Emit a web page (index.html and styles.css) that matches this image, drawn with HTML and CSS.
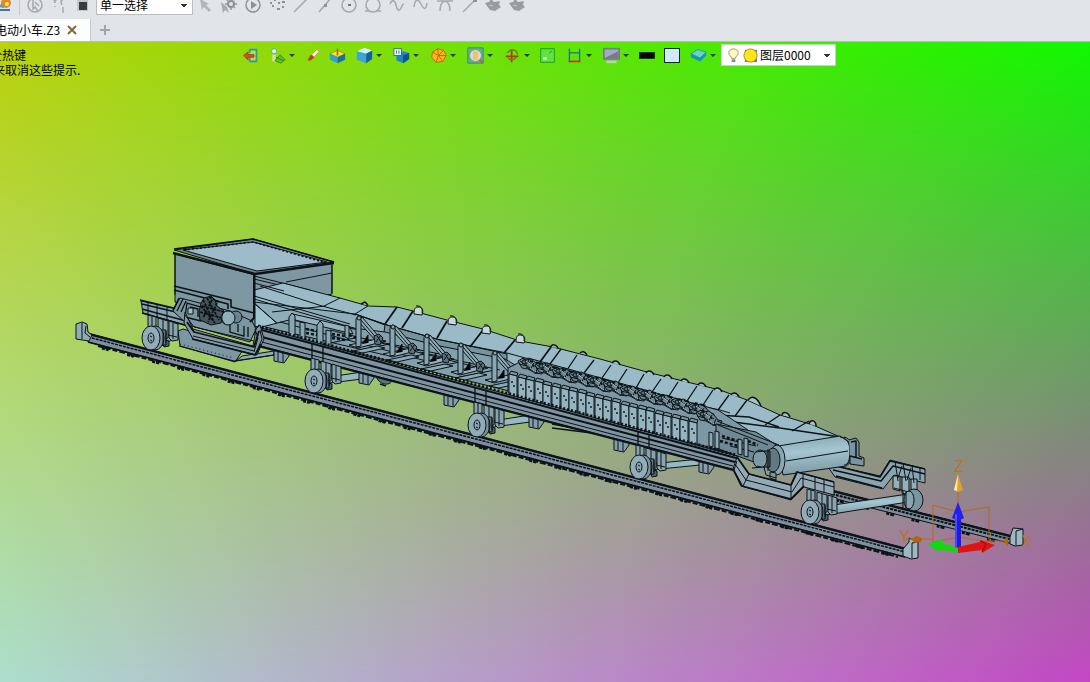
FILE: index.html
```html
<!DOCTYPE html>
<html lang="zh-CN">
<head>
<meta charset="utf-8">
<title>电动小车.Z3</title>
<link rel="stylesheet" href="styles.css">
</head>
<body>
<div class="app">
<header class="chrome">
  <div class="toolbar">
    <button class="tool tool-first" aria-label="样式"><svg viewBox="0 0 24 20"><path d="M7 12l5-8v9z" fill="#4a9bd0"/><circle cx="14" cy="8" r="5" fill="#e48a1c"/><circle cx="15" cy="9" r="2" fill="#fbe6b0"/><path d="M6 15h12" stroke="#3a78b0" stroke-width="2"/></svg></button>
    <span class="sep"></span>
    <button class="tool" aria-label="历史"><svg viewBox="0 0 24 20"><circle cx="12" cy="10" r="7" class="g"/><path d="M10 5v9l2-2 3 4M12 7l4 4" class="g"/></svg></button>
    <button class="tool" aria-label="链"><svg viewBox="0 0 24 20"><path d="M8 5v3M16 5c-3 0-2 3-1 5M16 12v6M8 11v1" class="g"/><path d="M6 3l4 2-3 3z" fill="#a9adb0"/></svg></button>
    <button class="tool tool-square" aria-label="填充"><svg viewBox="0 0 24 20"><path d="M6 5h11v11H6z" fill="#c4c7ca"/><path d="M8 7h8v8H8z" fill="#3c3c3c"/></svg></button>
    <select class="filter" aria-label="选择方式"><option>单一选择</option></select>
    <button class="tool" aria-label="选择"><svg viewBox="0 0 24 20"><path d="M7 4l2 11 2-3 5 5 2-2-5-5 3-1z" fill="#b2b5b8"/></svg></button>
    <button class="tool" aria-label="选项"><svg viewBox="0 0 24 20"><path d="M4 7l2 11 2-3 4 3-2-6z" fill="#a8abae"/><circle cx="14" cy="9" r="3" class="g d w"/><path d="M14 3v2M14 13v2M8 9h2M18 9h2M10 5l1 1M17 5l1-1M17 12l1 1" class="g d"/></svg></button>
    <button class="tool" aria-label="播放"><svg viewBox="0 0 24 20"><circle cx="12" cy="10" r="7" class="g d"/><path d="M10 6l6 4-6 4z" fill="#8e9194"/></svg></button>
    <button class="tool" aria-label="点集"><svg viewBox="0 0 24 20"><path d="M5 8h2M9 5h2M13 8h2M17 7h3M7 11h2M12 14h3M17 12h2" class="g d w"/></svg></button>
    <button class="tool" aria-label="直线"><svg viewBox="0 0 24 20"><path d="M5 17L19 3" class="g"/></svg></button>
    <button class="tool" aria-label="中点"><svg viewBox="0 0 24 20"><path d="M6 17L18 3" class="g"/><path d="M11 9h3v3h-3z" fill="#8e9194"/></svg></button>
    <button class="tool" aria-label="圆心"><svg viewBox="0 0 24 20"><circle cx="12" cy="10" r="7" class="g"/><path d="M11 9h3v2h-3z" fill="#777"/></svg></button>
    <button class="tool" aria-label="圆"><svg viewBox="0 0 24 20"><circle cx="12" cy="10" r="7" class="g"/><path d="M4 16h4M16 16h4" class="g"/></svg></button>
    <button class="tool" aria-label="曲线"><svg viewBox="0 0 24 20"><path d="M5 9c2-5 5-4 6 1s3 7 5 3 1-4 3-4" class="g"/></svg></button>
    <button class="tool" aria-label="样条"><svg viewBox="0 0 24 20"><path d="M5 12c1-8 4-9 7-3s5 6 6-1" class="g"/></svg></button>
    <button class="tool" aria-label="相切"><svg viewBox="0 0 24 20"><path d="M4 6h16M7 16c0-13 10-13 10 0" class="g"/></svg></button>
    <button class="tool" aria-label="端点"><svg viewBox="0 0 24 20"><path d="M6 17L18 5" class="g"/><path d="M16 3h4v4h-4z" fill="#8e9194"/></svg></button>
    <button class="tool" aria-label="零件"><svg viewBox="0 0 24 20"><path d="M4 8l4-1 2-3 3 3 6-1-1 4 2 2-6 4-5-1-3-4z" fill="#999c9f"/><path d="M8 10l4 1" stroke="#c6c8ca" fill="none"/></svg></button>
    <button class="tool" aria-label="组件"><svg viewBox="0 0 24 20"><path d="M4 8l4-1 2-3 3 3 6-1-1 4 2 2-6 4-5-1-3-4z" fill="#999c9f"/><path d="M8 10l4 1" stroke="#c6c8ca" fill="none"/></svg></button>
  </div>
  <div class="tabs">
    <div class="tab"><span class="tab-name">电动小车.Z3</span><button class="tab-close" aria-label="关闭"><svg viewBox="0 0 10 10"><path d="M1 1l8 8M9 1L1 9" stroke="#806a3c" stroke-width="2"/></svg></button></div>
    <button class="tab-add" aria-label="新建"><svg viewBox="0 0 12 12"><path d="M6 1v10M1 6h10" stroke="#a2a5a8" stroke-width="2"/></svg></button>
  </div>
</header>

<main class="view">
  <svg class="scene" viewBox="0 42 1090 640" role="img" aria-label="三维模型">
    <defs>
      <linearGradient id="drum" x1="0" y1="0" x2="0.150" y2="1"><stop offset="0" stop-color="#86a4b0"/><stop offset="0.450" stop-color="#a4c5d1"/><stop offset="1" stop-color="#7f9ba7"/></linearGradient>
      <g id="wheel">
        <path d="M8 -8h7v15H8z" fill="#617781"/>
        <ellipse cx="4" cy="0" rx="9" ry="12" fill="#7b949f"/>
        <ellipse cx="0" cy="0" rx="9" ry="12" fill="#93adb8"/>
        <ellipse cx="0" cy="0" rx="3" ry="5" fill="#8ba5b0"/>
        <path d="M-1 -2l2 1M-1 2l2 1M12 -6v14M15 -7v12"/>
      </g>
      <g id="legs">
        <path d="M-3 -25l8 2v15l-8-2zM7 -22l10 3v17l-6 1-4-3zM18 -19l9 3v16l-6 1-3-3z" fill="#8aa4af"/>
        <path d="M1 -24v14M12 -20v17M22 -17v16M8 -6h8M17 -5l9 2"/>
        <path d="M10 -2l8 3v5l-5 1z" fill="#4d616a"/>
      </g>
      <g id="bracket"><path d="M0 0l15 4v3l-5 7-10-2z" fill="#839eaa"/><path d="M4 1v11M9 3v10"/></g>
      <g id="frame">
        <path d="M-8 30l28-6 9 2-28 7z" fill="#93b2be"/>
        <path d="M-4 36l24-5 8 2-22 5z" fill="#8ba9b5"/>
        <path d="M2 3l3-1 18 21 1 5-5-2L2 7z" fill="#8fadb9"/>
        <path d="M4 5l17 20"/>
        <path d="M-1 32V4l2-3 3 1V31z" fill="#8aa6b2"/>
        <circle cx="2" cy="3" r="2" fill="#8ba5b0"/>
        <path d="M17 21l5-2 4 4-3 7-5-1z" fill="#5a717b"/>
        <path d="M20 21l4 6M24 20l-5 7M5 29l6-9v8"/>
      </g>
      <g id="plate">
        <path d="M0 0l2-3 7 2-1 3z" fill="#7b959f"/>
        <path d="M0 0l8 2v22l-8-3z" fill="#96b4c0"/>
        <path d="M3 7v2M5 11v2" stroke-width="1.400"/>
      </g>
      <g id="cluster">
        <path d="M-3 -5l5-3 3 2 5-1 5 4 4 5 4 1-2 5-7-1-7-4-6-1z" fill="#6c858f"/>
        <path d="M-1 -5l17 12M1 -8l14 9M5 1l12 6M8 -6l-4 6M13 -3l-4 7M17 1l-3 7M-2 -2l8 2M7 -5l6 6"/>
        <circle cx="3" cy="-4" r="2" fill="#566c76"/>
        <path d="M5 -5l6 4M9 2l6 4" stroke="#a5c2cd"/>
      </g>
      <g id="idler"><path d="M-5 4c0-5 1-7 4-7 4 0 6 3 4 8z" fill="#c9d8dc" stroke-width="1"/><path d="M-3 -4c4 -1 7 2 6 7" fill="none"/></g>
    </defs>

    <g class="line">
      <!-- rear rail -->
      <path d="M832 490l181 46v8l-181-46z" fill="#7d8d99"/>
      <path d="M832 491l181 46" stroke-width="2"/>
      <path d="M832 494l181 46" stroke-width="2" stroke-dasharray="3 1"/>
      <path d="M836 500l175 45" stroke-width="3" stroke-dasharray="3 1 4 18"/>
      <path d="M1010 544v-7l3-9 10 1v16l-8 1z" fill="#9db8c2"/><path d="M1016 545v-14l7-2"/>

      <!-- front rail -->
      <path d="M88 333l817 215v9L88 342z" fill="#7f8e9e"/>
      <path d="M88 334l817 215" stroke-width="2"/>
      <path d="M88 337l817 215" stroke-width="1.500" stroke-dasharray="3 1"/>
      <path d="M88 342l817 215" stroke-width="1.800"/>
      <path d="M98 346l800 211" stroke-width="2" stroke-dasharray="5 2 6 2"/>
      <path d="M102 348l796 209" stroke-width="3" stroke-dasharray="3 1 3 19"/>
      <path d="M76 324l6-2 5 2 1 8 4 3-3 6-13-2z" fill="#90abb6"/><path d="M82 323v16M86 326l-1 7 5 4"/>
      <path d="M903 556v-7l6-7v-4l9 4v16l-7 1z" fill="#9db8c2"/><path d="M912 558v-15l6-1"/>

      <!-- axles -->
      <path d="M322 378l40-6v7l-40 5zM486 422l44-7v7l-44 6zM650 464l50-5v6l-50 5z" fill="#98b8c4"/>
      <path d="M820 507l88-13v8l-88 14z" fill="url(#drum)"/>
      <path d="M160 337l20-6 8 4-24 8z" fill="#86a0ac"/>

      <!-- lower chute -->
      <path d="M178 331l5-2 62 18-10 15-55-16z" fill="#7c96a2"/>
      <path d="M236 361l38-6v-4l-32 5z" fill="#8fabb7"/>
      <path d="M179 346l55 15 40-6"/>
      <path d="M180 344l54 14" stroke-dasharray="1 3"/>

      <!-- brackets under the frame -->
      <use href="#bracket" x="274" y="349"/><use href="#bracket" x="359" y="371"/><use href="#bracket" x="444" y="393"/><use href="#bracket" x="529" y="415"/><use href="#bracket" x="614" y="438"/><use href="#bracket" x="699" y="460"/>
      <path d="M376 376c2 8 14 12 17 3z" fill="#5d737d"/><path d="M552 424l38 7M552 428l40 5M380 384l6 2" stroke-width="1.500"/>

      <!-- rear chassis -->
      <path d="M828 467l4-2 48 11 10-16 35 9v14l-31-8-11 14-48-12z" fill="#8ba5b0"/>
      <path d="M832 465l48 12 10-16 35 8M833 470l48 11 12-15 32 8M836 476l46 12" stroke-width="1.500"/>
      <path d="M893 476h7v15l-7-2zM902 477h7v18l-7-2zM911 479h6v19l-6-3z" fill="#94b0bb"/>
      <path d="M895 461l3 20M903 463l3 18M912 465l2 18M920 468v12M894 488l22 6M898 478l4-12M907 480l4-12"/>
      <ellipse cx="914" cy="500" rx="9" ry="11" fill="#7b95a0"/><ellipse cx="909" cy="500" rx="5" ry="9" fill="#88a5b0"/><path d="M903 491v17M906 492v16"/>

      <!-- hopper rear wall and belt -->
      <path d="M254 274l78-11v31l-20 5-58-8z" fill="#7f97a2"/>
      <path d="M254 276l56 14M254 279l46 11M286 282l46-9"/>
      <path d="M254 290l29-7 57 15 28 8 29 1 16 4 34 9 36 9 37 12 33 6 47 12 47 13 40 10 33 8 27 10 33 15 33 10 27 12-62 11-58-25-45-13-53-13-60-15-53-14-32-10-70-15-50-15-32-11-100-12z" fill="#99bac6"/>
      <path d="M355 314l32 11 50 14 70 15v10l-32-1-36-10-52-13-34-10z" fill="#7893a0"/>
      <path d="M254 302l101 12 30 11-2 14-97-5-32-9z" fill="#8fadb9"/>
      <path d="M254 303l33 29-33-6z" fill="#a1c3cf"/>
      <path d="M260 286l62 20 34 9M340 298l-16 8M326 306l-54 6M254 303l33 29M254 296l96 28M254 299l100 29M254 283l30 8"/>
      <path d="M368 306l-13 8 32 11 53 15 67 13 33 9 47 15 53 13 47 13 33 7 10 3"/>

      <!-- belt seams -->
      <path d="M397 307l-12 17M413 311l-11 17M447 321l-10 17M483 330l-13 17M515 340l-11 13M551 347l-11 15" stroke-width="1.800"/>
      <path d="M561 349l-11 15M577 355l-10 15M594 360l-10 13M611 365l-9 13M627 369l-9 14M644 374l-8 14M661 379l-9 13M678 382l-9 14M697 386l-10 15M713 390l-10 15M729 395l-11 15M747 400l-12 16M780 415l-15 10M809 421l-17 10" stroke-width="1.300"/>
      <path d="M718 420l62 8 60 9M717 415l32 2 30 10" stroke-width="1.500"/>

      <!-- return idlers along the upper edge -->
      <use href="#idler" x="419" y="310"/><use href="#idler" x="453" y="320"/><use href="#idler" x="487" y="329"/><use href="#idler" x="521" y="338"/>
      <path d="M361 304l4-2 3 3M551 347c0-3 5-3 7 1M580 353c2-2 5-2 7 2M612 363c2-3 6-3 8 2M646 373c1-3 6-3 8 2M664 377c1-3 6-3 8 2M681 381c1-3 6-3 8 2M698 385c1-3 6-3 8 2M714 390c1-3 6-3 8 2M731 395c1-3 6-3 8 2M748 400c4-5 9-3 13 6M782 415c1-4 6-3 8 2M809 424c1-5 7-4 7 2" fill="#a9c0c9" stroke-width="1.500"/>
    </g>

    <!-- deck and frames -->
    <g class="line">
      <path d="M258 328l31-8 96 12 50 13 70 14 20 12v24z" fill="#839fab"/>
      <path d="M265 327l120 28M280 322l150 40M330 330l150 38M300 320l60 10M370 340l70 14M420 352l80 18M320 345l40-8M350 352l40-8M385 362l40-8M420 370l40-8M455 378l40-8"/>
      <path d="M293 314l52 12 5 2 3 6-58-14z" fill="#93b2be"/>
      <path d="M289 338v-21l3-4 3 3v24zM300 341v-19l5 1v19zM317 346v-21l3-4 3 3v24zM326 346v-16l5 1v17zM345 337v-12l4 1v13z" fill="#8aa6b2"/>
      <path d="M306 329l11 2M306 333l11 2M332 334l13 2M332 338l13 2M349 335l14 6" stroke-width="2.500" stroke-dasharray="3 2"/>
      <use href="#frame" x="357" y="315"/><use href="#frame" x="391" y="324"/><use href="#frame" x="425" y="333"/><use href="#frame" x="459" y="342"/><use href="#frame" x="493" y="350"/>
      <path d="M508 368l20-10 190 52 30 20v28l-240-66z" fill="#7d98a4"/>
      <use href="#cluster" x="521" y="366"/><use href="#cluster" x="538" y="370"/><use href="#cluster" x="555" y="375"/><use href="#cluster" x="572" y="379"/><use href="#cluster" x="589" y="384"/><use href="#cluster" x="606" y="388"/><use href="#cluster" x="623" y="393"/><use href="#cluster" x="640" y="397"/><use href="#cluster" x="657" y="402"/><use href="#cluster" x="674" y="406"/><use href="#cluster" x="691" y="411"/><use href="#cluster" x="699" y="418"/>
      <path d="M530 361l180 46" stroke-width="2" stroke-dasharray="3 3 5 6"/>
      <use href="#plate" x="509" y="374"/><use href="#plate" x="518" y="377"/><use href="#plate" x="526" y="379"/><use href="#plate" x="535" y="381"/><use href="#plate" x="543" y="384"/><use href="#plate" x="552" y="386"/><use href="#plate" x="561" y="388"/><use href="#plate" x="569" y="390"/><use href="#plate" x="578" y="392"/><use href="#plate" x="586" y="395"/><use href="#plate" x="595" y="397"/><use href="#plate" x="603" y="399"/><use href="#plate" x="612" y="401"/><use href="#plate" x="621" y="404"/><use href="#plate" x="629" y="406"/><use href="#plate" x="638" y="408"/><use href="#plate" x="646" y="410"/><use href="#plate" x="655" y="413"/><use href="#plate" x="663" y="415"/><use href="#plate" x="672" y="417"/><use href="#plate" x="680" y="419"/><use href="#plate" x="689" y="421"/>

      <!-- head end -->
      <path d="M716 424l40 8 22 14-8 22-54-20z" fill="#6f8893"/>
      <path d="M717 421l62 24M718 425l50 20M722 438l34 8M730 446l24 6"/>
      <path d="M709 446v-14l4 1v14zM715 448v-17l4 1v17zM738 454v-15l4 1v15zM744 456v-18l4 1v18z" fill="#8ba8b4"/>
      <path d="M720 441l18 5M722 436l16 5M748 441l10 4" stroke-width="2.500" stroke-dasharray="3 2"/>
      <path d="M778 446l62-10 9 6 2 20-5 4-63 9z" fill="url(#drum)"/>
      <path d="M786 461l62-10"/>
      <path d="M840 437c7 0 11 8 10 17s-3 11-6 11M844 437c7 2 9 8 8 15s-3 11-5 12"/>
      <ellipse cx="777" cy="460" rx="8" ry="15" fill="#8aa6b1"/><ellipse cx="773" cy="460" rx="7" ry="12" fill="#627983"/>
      <path d="M764 451h6v16h-6z" fill="#4b6069"/><ellipse cx="760" cy="459" rx="7" ry="9" fill="#7f9aa5"/><path d="M756 452l8-1M757 466l8 2M768 449v22"/>
      <path d="M849 440l7-2 3 4v14l5 2v8l-14-2v-8" fill="#7b95a0"/><path d="M851 442l5-1v16M850 456l12 3" stroke-width="1.500"/>
      <path d="M752 468l12-1 2 8 10 3M770 472l6 1v7l-6-2z" fill="#7f99a4"/>

      <!-- main beam -->
      <path d="M254 329l4-2 479 129-1 14-479-125z" fill="#8093a0"/>
      <path d="M258 329l478 129" stroke-width="2"/>
      <path d="M258 326l478 129" stroke-width="3" stroke-dasharray="2 2"/>
      <path d="M258 336l477 126" stroke-width="2"/>
      <path d="M258 341l475 125"/>
      <path d="M258 346l475 124" stroke-width="2"/>
      <path d="M312 343v15M323 346v15M475 387v15M486 390v15M638 431v15M649 434v15" stroke-width="1.300"/>

      <!-- front end of chassis -->
      <path d="M737 457l12 17 42 11 6-13 37 10v13l-30-8-13 13-50-14-8-17z" fill="#93a9b5"/>
      <path d="M737 457l12 17 42 11 6-13 37 10M733 469l9 17 49 13 13-13" stroke-width="1.800"/>
      <path d="M735 464l11 16 46 12 9-14 33 9M737 461l-3 9M749 474l-6 12M791 486v13M803 474v12M815 478v12M824 480v12"/>

      <!-- feeder drive -->
      <path d="M175 254l80 21v53l-80-26z" fill="#7d97a3"/>
      <path d="M174 286l57 14v7l23 6M174 290l54 14v5" stroke-width="1.600"/>
      <path d="M141 301l40 9 8 16-46-13z" fill="#8ba5b0"/>
      <path d="M140 300l42 10M142 304l42 10M142 309l44 12M142 313l46 13" stroke-width="1.500"/>
      <path d="M148 302v12M157 304v13M167 307v13"/>
      <path d="M173 311l7-13 12 3 38 10 22 10 4 8-6 13-62-17z" fill="#7c96a1"/>
      <path d="M173 310l6-12M177 311l6-12M181 312l5-11M187 303l14 4v14l-16-4zM190 307l8 2v8M230 322v10l14 4v-10M238 324v8M248 327v10" stroke-width="1.300"/>
      <path d="M188 308h5v6h-5z" fill="#a2bec8"/>
      <path d="M201 303l3-5 7-2 4 4 2 6 7 5-3 12-10 2-11-5-1-8z" fill="#46565d"/>
      <path d="M203 300l11 22M207 298l12 22M201 306l14 17M212 300l-9 18M217 303l-9 19M200 312l22 6M202 306l22 6M209 297l10 5" stroke-width="1.800" stroke-dasharray="3 1"/>
      <circle cx="236" cy="317" r="6" fill="#6b838e"/><circle cx="228" cy="318" r="7" fill="#91aeb9"/><path d="M224 312c-3 4-3 8 1 12"/>
      <path d="M185 312l8 17 60 17 3-17 4-4 4 14-7 16-64-16-9-16z" fill="#8299a5"/>
      <path d="M187 322l7 10 60 15 5-16M192 339l63 16 6-11" stroke-width="1.800"/>
      <path d="M185 315l9 12 60 14M193 336l61 15M255 329l3 9-4 14M260 330l2 9-5 12"/>
      <path d="M254 275v43l-4 4" stroke-width="2"/>

      <!-- hopper rim -->
      <path d="M174 250l79-11 81 23-79 12z" fill="#71858f"/>
      <path d="M183 250l70-8 74 20-70 9z" fill="#9dbbc8"/>
      <path d="M174 249l79-10 81 23" stroke-width="1.500"/>
      <path d="M173 253l82 21 79-11" stroke-width="2.400"/>
      <path d="M184 250l69-8 73 21" stroke-width="1.500" stroke-dasharray="2 2"/>
      <path d="M175 253v42M332 265v28"/>

      <!-- wheel sets -->
      <use href="#legs" x="151" y="340"/><use href="#legs" x="314" y="383"/><use href="#legs" x="477" y="427"/><use href="#legs" x="639" y="470"/><use href="#legs" x="810" y="514"/>
      <use href="#wheel" x="151" y="338"/><use href="#wheel" x="314" y="381"/><use href="#wheel" x="477" y="425"/><use href="#wheel" x="639" y="467"/><use href="#wheel" x="810" y="512"/>
    </g>

    <!-- axis triad -->
    <g class="triad">
      <path d="M933 545v-40l25 7 31-5v38M958 490v20M933 542l25-5 31 5M905 539h28M989 541h20" fill="none" stroke="#b5691e"/>
      <path d="M954 490l4-16 5 16-5 2z" fill="#e3a02d"/><path d="M958 474l-4 16 3 1z" fill="#fff0b4"/>
      <path d="M911 539l6-3 5 2-1 4-6 1zM1003 541l5-4v9z" fill="#b0640f"/>
      <path d="M955 518h6v31l-3 2-3-2z" fill="#1d1ae0"/><path d="M952 518l6-16 6 16-6 3z" fill="#2220f0"/><path d="M956 514v34" stroke="#7d7bff"/>
      <path d="M958 552l-20-2v2l-10-8 14-5v4l16 5z" fill="#11d811"/>
      <path d="M958 547l22-5v-2l15 5-13 8v-3l-24 3z" fill="#e01212"/><path d="M981 541l5 3-4 8" stroke="#8d0808" fill="none"/>
      <text x="954" y="472">Z</text><text x="899" y="542">Y</text><text x="1021" y="547">X</text>
    </g>
  </svg>

  <div class="overlay">
    <p class="hints"><span class="hint hint-a">全热键</span><span class="hint">来取消这些提示.</span></p>
    <div class="viewbar">
      <button class="vb" aria-label="退出"><svg viewBox="0 0 20 20"><path d="M9 3h8v14H9M9 3v4M9 13v4" fill="#b4dc60" stroke="#2b9aa0" stroke-width="2"/><path d="M2 10l5-4v3h7v3H7v3z" fill="#d8551c" stroke="#9b3410"/></svg></button>
      <button class="vb drop" aria-label="显示"><svg viewBox="0 0 20 20"><circle cx="6" cy="5" r="3" fill="#e8f5fb" stroke="#5598b0"/><path d="M4 9h4v8H4z" fill="#d8dfa8"/><path d="M7 16l6-7 6 6-5 4z" fill="#5ac420" stroke="#338810"/><path d="M8 12l9 4" stroke="#2a7a10"/></svg></button>
      <button class="vb" aria-label="笔刷"><svg viewBox="0 0 20 20"><path d="M9 9l6-6 3 2-6 7z" fill="#fff3dc" stroke="#c98a4a"/><path d="M4 16l4-7 4 3-4 4z" fill="#c43a18"/></svg></button>
      <button class="vb" aria-label="基准"><svg viewBox="0 0 20 20"><path d="M1 8l9-4 9 4-9 4z" fill="#ffe42c" stroke="#a09010"/><path d="M1 8l9 4v7l-9-4z" fill="#28a5d8"/><path d="M10 12l9-4v7l-9 4z" fill="#1671a8"/><path d="M10 2v8" stroke="#aa7010" stroke-width="2"/></svg></button>
      <button class="vb drop" aria-label="着色"><svg viewBox="0 0 20 20"><path d="M1 5l9-4 9 3-7 4z" fill="#d4f1fb"/><path d="M1 5l11 3v11L1 15z" fill="#3ba4de"/><path d="M12 8l7-4v10l-7 5z" fill="#135f9e"/></svg></button>
      <button class="vb drop" aria-label="视图"><svg viewBox="0 0 20 20"><path d="M4 8l8-3 7 2v7l-7 5-8-3z" fill="#1f85c3"/><path d="M12 10l7-3v7l-7 5z" fill="#0c5389"/><path d="M1 2h9v8H1z" fill="#edf8fd" stroke="#245d8c"/><path d="M4 4v4M7 4v4" stroke="#245d8c"/></svg></button>
      <button class="vb drop" aria-label="线框"><svg viewBox="0 0 20 20"><path d="M3 6l6-4 7 2 3 6-4 7-8 1-5-6z" fill="#ffb517" stroke="#b9610a"/><path d="M10 10L9 2M10 10l9 0M10 10l5 7M10 10L3 6M10 10l-3 8M10 10l6-6" stroke="#b9610a"/></svg></button>
      <button class="vb drop" aria-label="缩放"><svg viewBox="0 0 20 20"><path d="M1 1h18v18H1z" fill="#5fb580" stroke="#2c7f90"/><circle cx="10" cy="10" r="7" fill="#d9dccd" stroke="#7d92a0"/><path d="M7 5h6v10H7z" fill="#eac27a"/><path d="M15 15l4 4" stroke="#c0622c" stroke-width="2"/></svg></button>
      <button class="vb drop" aria-label="旋转"><svg viewBox="0 0 20 20"><path d="M2 11h15M9 3v15" stroke="#bc3215" stroke-width="2"/><path d="M4 7c4-6 11-4 12 2M5 12c0 4 8 4 9 0" fill="none" stroke="#816e1c" stroke-width="1.500"/></svg></button>
      <button class="vb" aria-label="窗口"><svg viewBox="0 0 20 20"><path d="M2 2h16v16H2z" fill="#62e23c" stroke="#138b41"/><path d="M5 12h4v3H5z" fill="#d5f8f3"/><path d="M12 7l3-2" stroke="#138b41"/></svg></button>
      <button class="vb drop" aria-label="测量"><svg viewBox="0 0 20 20"><path d="M4 2v15M16 2v15M4 7h12" fill="none" stroke="#14749b" stroke-width="1.500"/><path d="M3 17h14" stroke="#d0340f" stroke-width="2"/></svg></button>
      <button class="vb drop" aria-label="显示器"><svg viewBox="0 0 20 20"><path d="M0 1h20v14H0z" fill="#777b80"/><path d="M2 3h16v10H2z" fill="#a4a9cc"/><path d="M2 13L18 5v8z" fill="#747b8f"/><path d="M4 16h12v3H4z" fill="#c6c8c9"/></svg></button>
      <button class="vb" aria-label="线宽"><span class="swatch-line"></span></button>
      <button class="vb" aria-label="颜色"><span class="swatch-fill"></span></button>
      <button class="vb drop" aria-label="图层"><svg viewBox="0 0 20 20"><path d="M1 8l8-5 10 3v4l-7 7-11-5z" fill="#1794b8"/><path d="M1 8l8-5 10 3-7 7z" fill="#65d7c1" stroke="#278ea0"/></svg></button>
      <div class="layer">
        <svg viewBox="0 0 12 16"><path d="M4 11c0-2-3-3-3-6a5 4 0 0 1 10 0c0 3-3 4-3 6z" fill="#fff9ca" stroke="#b29130"/><path d="M4 12h4v3H4z" fill="#7e8da5"/></svg>
        <svg viewBox="0 0 16 16"><path d="M2 2h13v13H2z" fill="#68839a"/><circle cx="8" cy="8" r="7" fill="#ffe51c" stroke="#b98b14"/></svg>
        <select aria-label="图层"><option>图层0000</option></select>
      </div>
    </div>
  </div>
</main>
</div>
</body>
</html>
```

FILE: styles.css
```css
* { box-sizing: border-box; }

body {
  margin: 0;
  font: 12px/16px "Noto Sans CJK SC", sans-serif;
  color: #000;
}

.app {
  display: flex;
  flex-direction: column;
  height: 100vh;
  overflow: hidden;
}

button {
  display: inline-flex;
  align-items: center;
  justify-content: center;
  padding: 0;
  border: 0;
  background: none;
}

.chrome {
  background: #e1e4e8;
  border-bottom: 1px solid #b6bcb8;
}

.toolbar {
  display: flex;
  align-items: flex-end;
  height: 15px;
  overflow: hidden;
}

.tool {
  flex: none;
  width: 24px;
  height: 20px;
}

.tool svg { width: 24px; height: 20px; }
.tool-first { margin-left: -8px; }
.tool-square { margin-right: 1px; }

.sep {
  width: 1px;
  height: 20px;
  margin: 0 3px;
  background: #c5c8cb;
}

.g { fill: none; stroke: #a6a9ac; stroke-width: 1.5; }
.d { stroke: #8e9194; }
.w { stroke-width: 2; }

select {
  appearance: none;
  border: 0;
  font: inherit;
  color: #000;
  background-color: #fff;
  background-image:
    linear-gradient(to bottom left, #333 50%, transparent 51%),
    linear-gradient(to bottom right, #333 50%, transparent 51%);
  background-size: 3px 3px;
  background-repeat: no-repeat;
  background-position: right 8px center, right 5px center;
}

.filter {
  flex: none;
  width: 97px;
  height: 20px;
  padding: 0 3px;
  border: 1px solid #b9bcc0;
}

.tabs {
  display: flex;
  align-items: center;
  margin-top: 4px;
}

.tab {
  display: flex;
  align-items: center;
  gap: 7px;
  height: 22px;
  padding-right: 13px;
  background: #fcfdfd;
  border-right: 1px solid #c5c8cb;
}

.tab-name { margin-left: -5px; }
.tab-close svg { width: 10px; height: 10px; }
.tab-add { margin-left: 8px; }
.tab-add svg { width: 12px; height: 12px; }

.view {
  position: relative;
  flex: 1;
  min-height: 0;
  background: linear-gradient(to right, #bad20a, #10f800);
}

.view::before {
  content: "";
  position: absolute;
  inset: 0;
  background: linear-gradient(to right, #acdecd, #c446c4);
  mask-image: linear-gradient(to bottom, transparent, #000);
}

.scene {
  position: absolute;
  inset: 0;
  width: 100%;
  height: 100%;
}

.line { stroke: #0b1318; stroke-width: 1; stroke-linejoin: round; }
.line path:not([fill]) { fill: none; }

.triad text {
  font: 16px "Liberation Sans", sans-serif;
  fill: #b87528;
}

.overlay {
  position: relative;
  display: flex;
  align-items: flex-start;
}

.hints {
  flex: none;
  width: 238px;
  margin: 5px 0 0;
  line-height: 15px;
}

.hint { display: block; margin-left: -7px; }
.hint-a { margin-left: -10px; }

.viewbar {
  display: flex;
  align-items: center;
  height: 26px;
}

.vb {
  flex: none;
  width: 25px;
  height: 20px;
}

.vb svg { width: 17px; height: 17px; }

.drop {
  width: 37px;
  gap: 3px;
}

.drop::after {
  content: "";
  border: 3px solid transparent;
  border-top-color: #263a10;
  border-bottom: 0;
}

.swatch-line {
  width: 16px;
  height: 7px;
  background: #000;
  border: 1px solid #1b3b10;
}

.swatch-fill {
  width: 16px;
  height: 15px;
  background: #cfeaf8;
  border: 1px solid #10222c;
}

.layer {
  display: flex;
  align-items: center;
  gap: 2px;
  width: 115px;
  height: 22px;
  padding-left: 4px;
  background-color: #fff;
  border: 1px solid #c3d8c0;
}

.layer svg { flex: none; width: 15px; height: 15px; }

.layer select {
  flex: 1;
  min-width: 0;
  padding: 0;
}
```
